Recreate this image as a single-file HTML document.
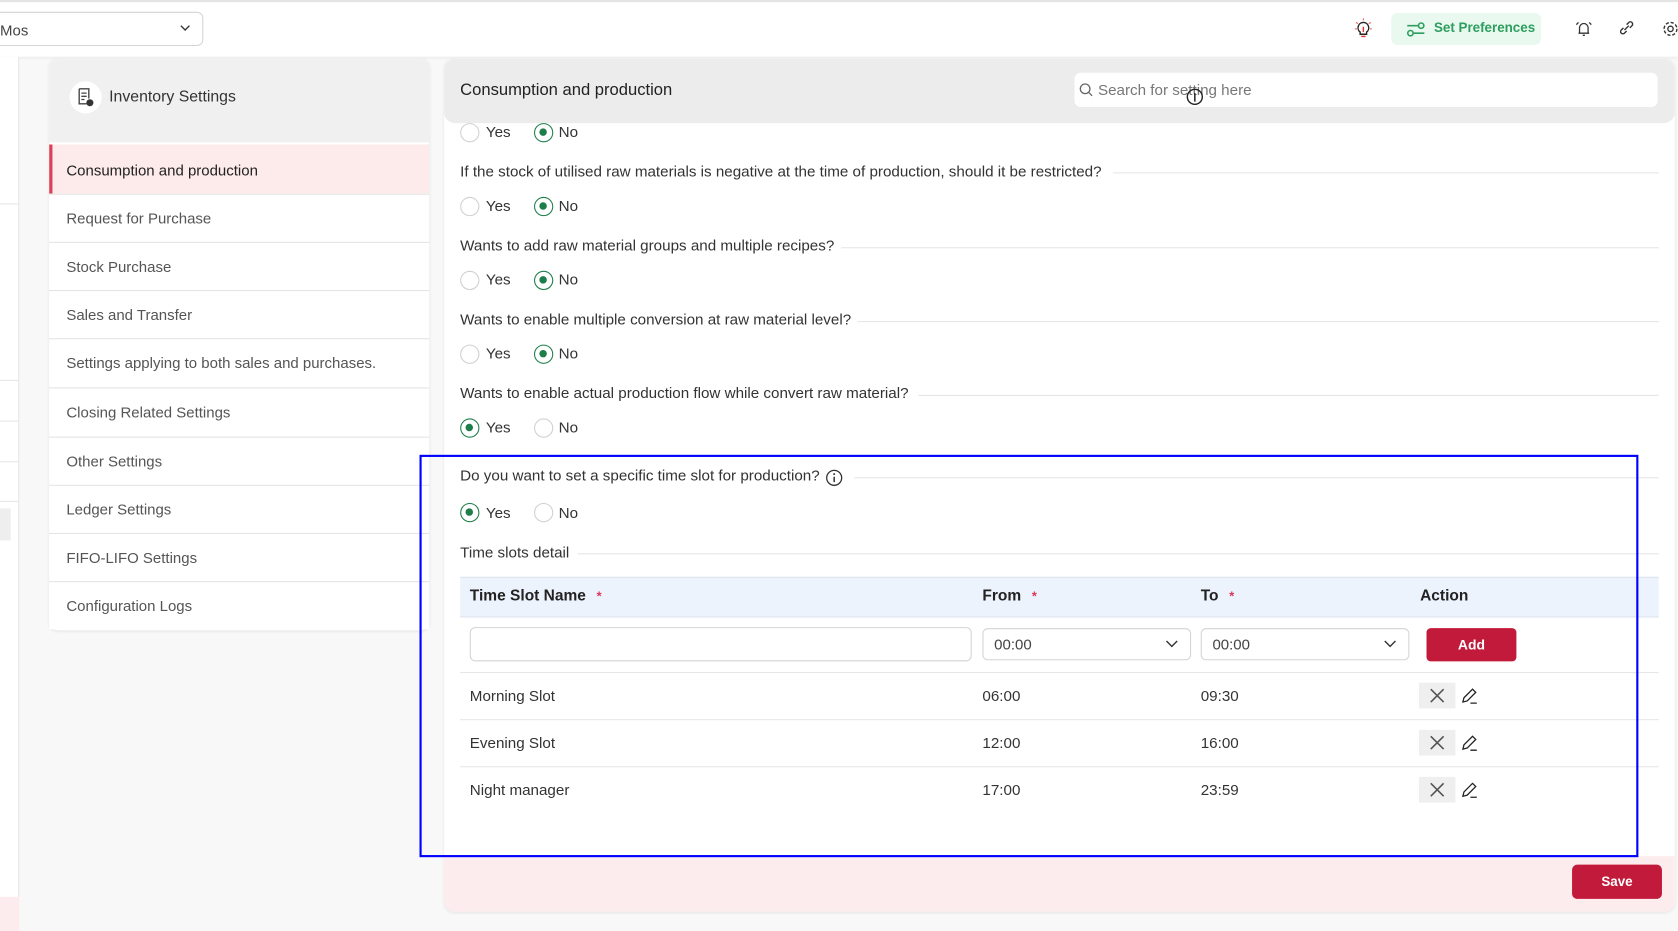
<!DOCTYPE html>
<html><head><meta charset="utf-8"><style>
*{box-sizing:border-box;margin:0;padding:0}
html,body{width:1678px;height:931px;overflow:hidden;background:#fff;font-family:"Liberation Sans",sans-serif;color:#333}
#w{position:absolute;left:0;top:0;width:1568px;height:870px;transform:scale(1.07015);transform-origin:0 0;background:#f8f8f9}
.a{position:absolute}
.t{position:absolute;font-size:14.2px;color:#333;white-space:nowrap}
.r{position:absolute;width:18px;height:18px;border:1px solid #d0d0d0;border-radius:50%;background:#fff}
.r.on{border:1.5px solid #1e7e4a}
.r.on:after{content:"";position:absolute;left:4px;top:4px;width:7px;height:7px;border-radius:50%;background:#1e7e4a}
.ln{position:absolute;height:1px;background:#e6e6e6}
.nav{position:absolute;left:46px;width:355px;height:45px;border-top:1px solid #e4e4e4;font-size:14px;color:#555;padding:0 0 0 16px;line-height:45px;background:#fff}
.sel{position:absolute;height:30px;border:1px solid #d4d4d4;border-radius:5px;background:#fff;font-size:14px;color:#444;padding-left:10px;line-height:28px}
.x{position:absolute;width:34px;height:24px;background:#efefef}
</style></head><body><div id="w">
<div class="a" style="left:0;top:0;width:1568px;height:53px;background:#fff;border-top:2px solid #e4e4e4;box-shadow:0 1px 3px rgba(0,0,0,.06)"></div>
<div class="a" style="left:-10px;top:11px;width:200px;height:32px;border:1px solid #d4d4d4;border-radius:6px;background:#fff"></div>
<div class="t" style="left:0;top:20px;font-size:14px;color:#444">Mos</div>
<svg class="a" style="left:167px;top:21px" width="12" height="10" viewBox="0 0 12 10"><path d="M2 3l4 4 4-4" fill="none" stroke="#333" stroke-width="1.3"/></svg>
<svg class="a" style="left:1265px;top:17px" width="18" height="20" viewBox="0 0 18 20"><path d="M9 4a5 5 0 0 0-3 9v2h6v-2a5 5 0 0 0-3-9z" fill="none" stroke="#222" stroke-width="1.3"/><path d="M7 17h4M9 8v5" stroke="#d33" stroke-width="1.3"/><path d="M2 4l2 1M16 4l-2 1M9 0v2M1 10h2M15 10h2" stroke="#e55" stroke-width="1"/></svg>
<div class="a" style="left:1300px;top:12px;width:140px;height:30px;background:#e9f9ef;border-radius:6px"></div>
<svg class="a" style="left:1314px;top:19px" width="18" height="16" viewBox="0 0 18 16"><path d="M1 5h10M7 12h10" stroke="#2e9e5e" stroke-width="1.5"/><circle cx="14" cy="5" r="2.5" fill="none" stroke="#2e9e5e" stroke-width="1.5"/><circle cx="4" cy="12" r="2.5" fill="none" stroke="#2e9e5e" stroke-width="1.5"/></svg>
<div class="t" style="left:1340px;top:19px;font-size:12.5px;color:#2e9e5e;font-weight:bold">Set Preferences</div>
<svg class="a" style="left:1472px;top:18px" width="16" height="18" viewBox="0 0 16 18"><path d="M4 13V8a4 4 0 0 1 8 0v5h1H3zM7 15h2M1 5l2-2M15 5l-2-2" fill="none" stroke="#333" stroke-width="1.2"/></svg>
<svg class="a" style="left:1512px;top:18px" width="16" height="16" viewBox="0 0 16 16"><path d="M6 10l4-4M5 8l-2 2a2 2 0 0 0 3 3l2-2M11 8l2-2a2 2 0 0 0-3-3L8 5" fill="none" stroke="#333" stroke-width="1.3"/></svg>
<svg class="a" style="left:1553px;top:18px" width="16" height="18" viewBox="0 0 16 18"><circle cx="8" cy="9" r="2.5" fill="none" stroke="#333" stroke-width="1.3"/><circle cx="8" cy="9" r="6" fill="none" stroke="#333" stroke-width="1.3" stroke-dasharray="3 1.7"/></svg>
<div class="a" style="left:0;top:53px;width:18px;height:817px;background:#fff;border-right:1px solid #e6e6e6"></div>
<div class="ln" style="left:0;top:190px;width:18px"></div><div class="ln" style="left:0;top:355px;width:18px"></div><div class="ln" style="left:0;top:393px;width:18px"></div><div class="ln" style="left:0;top:431px;width:18px"></div><div class="ln" style="left:0;top:468px;width:18px"></div>
<div class="a" style="left:0;top:475px;width:10px;height:30px;background:#eee"></div>
<div class="a" style="left:0;top:838px;width:18px;height:32px;background:#fdecee"></div>
<div class="a" style="left:46px;top:55px;width:355px;height:534px;background:#fff;border-radius:8px;box-shadow:0 1px 3px rgba(0,0,0,.08);overflow:hidden">
<div class="a" style="left:0;top:0;width:355px;height:78px;background:#f0f0f0"></div>
</div>
<div class="a" style="left:65px;top:76px;width:30px;height:30px;border-radius:50%;background:#fff"></div>
<svg class="a" style="left:71px;top:82px" width="18" height="18" viewBox="0 0 18 18"><path d="M3 1h9v9M3 1v14h7" fill="none" stroke="#444" stroke-width="1.3"/><path d="M5 5h5M5 8h5M5 11h3" stroke="#444" stroke-width="1.2"/><circle cx="13" cy="14" r="3.3" fill="#333"/></svg>
<div class="t" style="left:102px;top:83px;font-size:14.8px">Inventory Settings</div>
<div class="a" style="left:46px;top:135px;width:355px;height:46px;background:#fdeaea;border-left:3px solid #d9405a"></div>
<div class="t" style="left:62px;top:151px;color:#222;font-size:14px">Consumption and production</div>
<div class="nav" style="top:181px">Request for Purchase</div>
<div class="nav" style="top:226px">Stock Purchase</div>
<div class="nav" style="top:271px">Sales and Transfer</div>
<div class="nav" style="top:316px">Settings applying to both sales and purchases.</div>
<div class="nav" style="top:362px">Closing Related Settings</div>
<div class="nav" style="top:408px">Other Settings</div>
<div class="nav" style="top:453px">Ledger Settings</div>
<div class="nav" style="top:498px">FIFO-LIFO Settings</div>
<div class="nav" style="top:543px">Configuration Logs</div>
<div class="a" style="left:415px;top:55px;width:1150px;height:797px;background:#fff;border-radius:10px;box-shadow:0 1px 3px rgba(0,0,0,.08);overflow:hidden">
<div class="a" style="left:0;top:0;width:1150px;height:60px;background:#ececec;border-radius:10px"></div>
<div class="a" style="left:0;top:745px;width:1150px;height:52px;background:#fdecee"></div>
</div>
<div class="t" style="left:430px;top:76px;font-size:15.5px;color:#222">Consumption and production</div>
<div class="a" style="left:1004px;top:68px;width:545px;height:32px;background:#fff;border-radius:6px"></div>
<svg class="a" style="left:1008px;top:77px" width="14" height="14" viewBox="0 0 14 14"><circle cx="6" cy="6" r="4.5" fill="none" stroke="#666" stroke-width="1.2"/><path d="M9.5 9.5l3 3" stroke="#666" stroke-width="1.2"/></svg>
<div class="t" style="left:1026px;top:77px;color:#777">Search for setting here</div>
<svg class="a" style="left:1108px;top:82px" width="17" height="17" viewBox="0 0 17 17"><circle cx="8.5" cy="8.5" r="7" fill="none" stroke="#222" stroke-width="1.3"/><path d="M8.5 5v8" stroke="#222" stroke-width="1.4"/></svg>
<div class="r" style="left:430px;top:115px"></div><div class="t" style="left:454px;top:116px">Yes</div>
<div class="r on" style="left:499px;top:115px"></div><div class="t" style="left:522px;top:116px">No</div>
<div class="t" style="left:430px;top:153px">If the stock of utilised raw materials is negative at the time of production, should it be restricted?</div>
<div class="ln" style="left:1040px;top:161px;width:510px"></div>
<div class="r" style="left:430px;top:184px"></div><div class="t" style="left:454px;top:185px">Yes</div>
<div class="r on" style="left:499px;top:184px"></div><div class="t" style="left:522px;top:185px">No</div>
<div class="t" style="left:430px;top:222px">Wants to add raw material groups and multiple recipes?</div>
<div class="ln" style="left:786px;top:231px;width:764px"></div>
<div class="r" style="left:430px;top:253px"></div><div class="t" style="left:454px;top:254px">Yes</div>
<div class="r on" style="left:499px;top:253px"></div><div class="t" style="left:522px;top:254px">No</div>
<div class="t" style="left:430px;top:291px">Wants to enable multiple conversion at raw material level?</div>
<div class="ln" style="left:801px;top:300px;width:749px"></div>
<div class="r" style="left:430px;top:322px"></div><div class="t" style="left:454px;top:323px">Yes</div>
<div class="r on" style="left:499px;top:322px"></div><div class="t" style="left:522px;top:323px">No</div>
<div class="t" style="left:430px;top:360px">Wants to enable actual production flow while convert raw material?</div>
<div class="ln" style="left:858px;top:369px;width:692px"></div>
<div class="r on" style="left:430px;top:391px"></div><div class="t" style="left:454px;top:392px">Yes</div>
<div class="r" style="left:499px;top:391px"></div><div class="t" style="left:522px;top:392px">No</div>
<div class="t" style="left:430px;top:437px">Do you want to set a specific time slot for production?</div>
<svg class="a" style="left:771px;top:438px" width="17" height="17" viewBox="0 0 17 17"><circle cx="8.5" cy="8.5" r="7" fill="none" stroke="#333" stroke-width="1.2"/><path d="M8.5 7.5v5" stroke="#333" stroke-width="1.4"/><circle cx="8.5" cy="5" r="0.9" fill="#333"/></svg>
<div class="ln" style="left:798px;top:446px;width:752px"></div>
<div class="r on" style="left:430px;top:470px"></div><div class="t" style="left:454px;top:472px">Yes</div>
<div class="r" style="left:499px;top:470px"></div><div class="t" style="left:522px;top:472px">No</div>
<div class="t" style="left:430px;top:509px">Time slots detail</div>
<div class="ln" style="left:540px;top:517px;width:1010px"></div>
<div class="a" style="left:430px;top:539px;width:1120px;height:38px;background:#edf3fd;border-top:1px solid #dde4ee;border-bottom:1px solid #dde4ee"></div>
<div class="t" style="left:439px;top:549px;font-size:14.5px;font-weight:bold;color:#222">Time Slot Name <span style="color:#e0365a;margin-left:6px;font-size:12px">*</span></div>
<div class="t" style="left:918px;top:549px;font-size:14.5px;font-weight:bold;color:#222">From <span style="color:#e0365a;margin-left:6px;font-size:12px">*</span></div>
<div class="t" style="left:1122px;top:549px;font-size:14.5px;font-weight:bold;color:#222">To <span style="color:#e0365a;margin-left:6px;font-size:12px">*</span></div>
<div class="t" style="left:1327px;top:549px;font-size:14.5px;font-weight:bold;color:#222">Action</div>
<div class="a" style="left:439px;top:586px;width:469px;height:32px;border:1px solid #d4d4d4;border-radius:5px"></div>
<div class="sel" style="left:918px;top:587px;width:195px">00:00</div>
<div class="sel" style="left:1122px;top:587px;width:195px">00:00</div>
<svg class="a" style="left:1089px;top:597px" width="12" height="10" viewBox="0 0 12 10"><path d="M1 2l5 5 5-5" fill="none" stroke="#333" stroke-width="1.3"/></svg>
<svg class="a" style="left:1293px;top:597px" width="12" height="10" viewBox="0 0 12 10"><path d="M1 2l5 5 5-5" fill="none" stroke="#333" stroke-width="1.3"/></svg>
<div class="a" style="left:1333px;top:587px;width:84px;height:31px;background:#c21a3a;border-radius:4px;color:#fff;font-size:13px;font-weight:bold;text-align:center;line-height:31px">Add</div>
<div class="ln" style="left:430px;top:628px;width:1120px"></div>
<div class="ln" style="left:430px;top:672px;width:1120px"></div>
<div class="ln" style="left:430px;top:716px;width:1120px"></div>
<div class="t" style="left:439px;top:643px">Morning Slot</div><div class="t" style="left:918px;top:643px">06:00</div><div class="t" style="left:1122px;top:643px">09:30</div>
<div class="t" style="left:439px;top:687px">Evening Slot</div><div class="t" style="left:918px;top:687px">12:00</div><div class="t" style="left:1122px;top:687px">16:00</div>
<div class="t" style="left:439px;top:731px">Night manager</div><div class="t" style="left:918px;top:731px">17:00</div><div class="t" style="left:1122px;top:731px">23:59</div>
<div class="x" style="left:1326px;top:638px"></div><div class="x" style="left:1326px;top:682px"></div><div class="x" style="left:1326px;top:726px"></div>
<svg class="a" style="left:1326px;top:638px" width="34" height="24" viewBox="0 0 34 24"><path d="M11 6l12 12M23 6L11 18" stroke="#555" stroke-width="1.5"/></svg>
<svg class="a" style="left:1326px;top:682px" width="34" height="24" viewBox="0 0 34 24"><path d="M11 6l12 12M23 6L11 18" stroke="#555" stroke-width="1.5"/></svg>
<svg class="a" style="left:1326px;top:726px" width="34" height="24" viewBox="0 0 34 24"><path d="M11 6l12 12M23 6L11 18" stroke="#555" stroke-width="1.5"/></svg>
<svg class="a" style="left:1365px;top:641px" width="18" height="18" viewBox="0 0 18 18"><path d="M2 15l1-4 8-8 3 3-8 8zM9 16h6" fill="none" stroke="#222" stroke-width="1.2"/></svg>
<svg class="a" style="left:1365px;top:685px" width="18" height="18" viewBox="0 0 18 18"><path d="M2 15l1-4 8-8 3 3-8 8zM9 16h6" fill="none" stroke="#222" stroke-width="1.2"/></svg>
<svg class="a" style="left:1365px;top:729px" width="18" height="18" viewBox="0 0 18 18"><path d="M2 15l1-4 8-8 3 3-8 8zM9 16h6" fill="none" stroke="#222" stroke-width="1.2"/></svg>
<div class="a" style="left:392px;top:425px;width:1139px;height:376px;border:2px solid #0000ff"></div>
<div class="a" style="left:1469px;top:808px;width:84px;height:32px;background:#c21a3a;border-radius:5px;color:#fff;font-size:12.5px;font-weight:bold;text-align:center;line-height:32px">Save</div>
</div></body></html>
